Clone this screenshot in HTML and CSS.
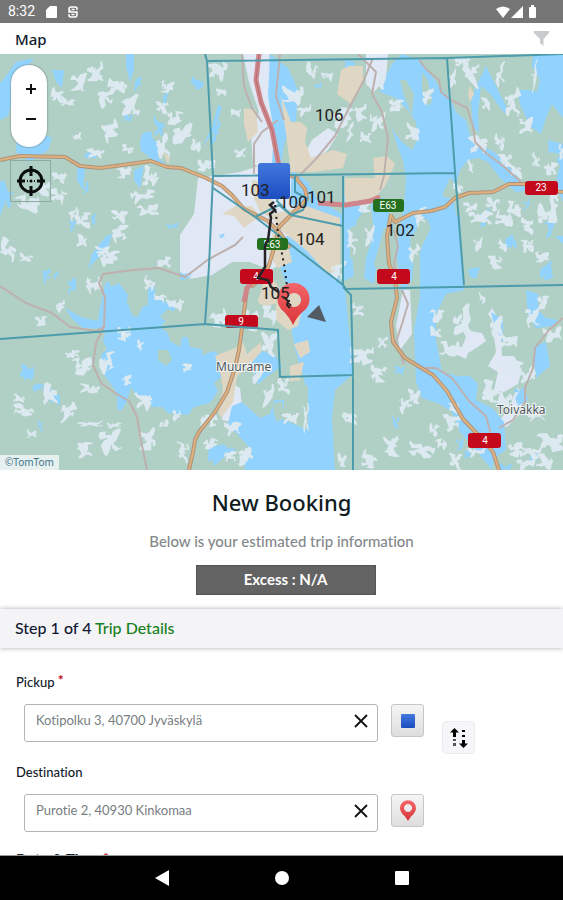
FILE: index.html
```html
<!DOCTYPE html>
<html lang="en">
<head>
<meta charset="utf-8">
<meta name="viewport" content="width=device-width, initial-scale=1">
<title>New Booking</title>
<link rel="stylesheet" href="styles.css">
</head>
<body>
<div class="status">
  <span class="clock">8:32</span>
  <svg width="11" height="12" viewBox="0 0 11 12"><path fill="#fff" d="M4 0h6q1 0 1 1v10q0 1-1 1H1q-1 0-1-1V4z"/></svg>
  <svg width="10" height="12" viewBox="0 0 10 12"><path fill="none" stroke="#fff" stroke-width="1.500" d="M9 4V2.500Q9 1 7 1H3Q1 1 1 3t2 3h4q2 0 2 2.500T7 11H3Q1 11 1 9.500V8M1 3v3h8v3M3.500 3.500h3M3.500 8.500h3"/></svg>
  <svg class="status-right" width="43" height="14" viewBox="0 0 43 14"><path fill="#fff" d="M0 4Q7-1 14 4L7 13zM27 1v12H15zM33 3q0-1 1-1h1V0h3v2h1q1 0 1 1v9q0 1-1 1h-5q-1 0-1-1z"/></svg>
</div>
<header class="topbar">
  <h1>Map</h1>
  <button class="filter" type="button" aria-label="Filter"><svg width="15" height="15" viewBox="0 0 15 15"><path fill="#c9cbcd" d="M0 0h15v2L9.500 8v7L6 12V8L0 2z"/></svg></button>
</header>
<section class="map" aria-label="Map">
<svg class="canvas" viewBox="0 54 563 416">
  <defs>
    <linearGradient id="blue" x1="0" y1="0" x2="0" y2="1"><stop offset="0" stop-color="#4278dd"/><stop offset="1" stop-color="#1c4dc0"/></linearGradient>
    <linearGradient id="red" x1="0" y1="0" x2="0" y2="1"><stop offset="0" stop-color="#f4666a"/><stop offset="1" stop-color="#d93538"/></linearGradient>
  </defs>
  <rect y="54" width="563" height="416" fill="#b0d0c5"/>
  <g fill="#dfe8f4">
    <path d="M180 235L194 214 198 178 214 176 240 172 262 165 275 172 300 180 300 240 285 262 270 270 250 262 232 262 212 275 190 279 180 272z"/>
    <path d="M243 54h26l4 40 6 60-8 18-18-8-2-30 8-22-10-30zM366 54l22 0-2 24-12 14-8-8zM312 140l16-12 10 6-10 16-18 14-8-6zM403 290l7 0 2 44-12 16-4-24zM446 350l6-5 10 2 4-10-6-12 6-6 4 12 12 2 4 8-8 6-10 6-2 6zM488 366l8-14-4-32-4-6 4-6 8 14 2 34 12 0 8 14-4 14-14 8-10-2 4-18zM495 425l14-16 8-22 10 12-6 14-14 14zM226 380l14 8 2 18-10 16-10-2z"/>
  </g>
  <g fill="#91d3fe">
    <path d="M392 64L402 54 420 60 432 76 440 88 450 98 456 112 466 120 470 135 482 146 494 152 508 165 520 180 530 190 516 192 500 178 488 162 478 158 468 160 460 170 456 184 450 178 442 196 454 200 460 240 460 284 440 288 422 280 434 240 428 220 418 216 416 236 412 280 402 292 396 250 404 206 406 180 403 160 398 148 391 126 394 132 402 142 412 150 417 140 416 122 408 110 396 98 380 92 384 80z"/>
    <path d="M533 54H563V118L552 104 546 118 541 134 530 126 520 104 518 90 530 90 537 92 540 80 532 66zM486 66l8 16 13 26-2 6-15-20-9-8-3 28 1 20-6-8-2-26 7-17zM345 60l10 2-2 12-8-4zM548 140l15 4v12l-10-4-4 6zM556 160l7-8v50l-6-12z"/>
    <path d="M344 196l14-6 10 8-4 12-8 12 4 16-8 16 2 22-12 6zM370 198l14 0 6 12-4 22-8 22-4 30-10-6 2-20 8-26zM420 250l14-28 14-8 12 2 4 74-18 4-10 20 0 26 6 32 16 4 12 0 8 8-2 16 16 8 12 14 2 28-12 8-2 12-16-20-16-18-8-20-12-8-18-6-6-16-2-52 6-34z"/>
    <path d="M270 54l18 14 10 22-2 30-12 24-4 28-8-10 2-30-6-36zM292 170l16 12 10 18 24 14 2 14-18-4-22-8-14-14zM286 236l24 4 20 24 15 24 3 32 3 26 2 28-18 16-3 28 3 54H244l4-26-20-22 4-18 10-4 18 16 10-4 4-14 14 0 8 12 12 3 0-18-6-26-6-18-4-20 0-20-5-26-7-20z"/>
    <path d="M105 284l4-3 2 6 8-4 9 12-2 10 4 10 8 2 4-10 6-2 0-16 6-6 2 18 6-4 4 6 10 0-2 8-6-2-8 8 6 4-6 6 8 6 2 8 10 6 2-10 6 0 2 10 12 2 0 6 12-4 10 8-2 10 4 4-12 10 4 8-8 12-16 4-6 8-20-2-6-6-10 0-8-10-8-2-5-8-4 14-6 10-4-2 0-16-14-20-2-18 6-6-4-8 2-8-8-10zM65 308l16 9 24 6 2 6-24-1-10-8z"/>
    <path d="M0 84l16-22 18-4-8 10 4 10-14 8-8 30-8 4zM18 118l20 14 14 6-4 12-18 12-14-10zM143 133l8-2 2 8 7 6-2 12 8 8-8 0-11-10-6-4-1-10zM194 80l10 2-2 6-6 2zM218 105l4 2-8 24-12 16 10-20zM126 54l8 0 0 16-4 12-4-16zM52 70l12 0-2 18-6-6zM106 236l6-2-4 14-16 16-4 6 4-16zM84 154l16-4-4 8-10 0zM77 168l8 0-2 22-6-10zM134 170l10-4-4 22-6-8zM4 180l4 12-4 14-4 10v-34zM22 372l10-4 2 8-10 4zM42 384l8 4 10 10-8 0-8-4zM110 290l18 14 6 16-8 4-12-12zM240 356l14-6 20 4 8 12-14 10-10 8-6-16zM210 448l14-4 4 10-14 12z"/>
    <path d="M491 312l12 8 0 22-8-14zM526 290l12 4 0 16 8 8 12 2-6 6-16 2-8-12zM534 346l12-4 4 24-14 12-2-18zM516 396l8-10 4 14-10 6zM506 238l8-3-2 12-8 0zM540 270l10-8 2 10-12 6zM555 236l8 0 0 8zM468 269l12-2-4 12-6-2z"/>
  </g>
  <g fill="#dfd7c3">
    <path d="M349 66l14 0 0 18-12 20-14-10 4-24zM244 108l12 2 2 22-10 10-4-18zM281 96l10 26 10 0 6 6-2 14 6 16 22-8 14 4-4 14-30 4-22 0zM222 214l14-8 16 0 8 10-16 12-10-12zM252 180l18 4 4 36-14-8-6-14zM306 206l34 12 0 52-12 4-22-24-30-24-4-12zM345 178l30 0-2-20 14-2 8 8-10 22-12 14-28 4zM274 228l14 16 4 18-14 6-10-14zM246 276l20-4 14 16 4 14-20 4-18-10zM215 356l20-8 8-6 4 12 14-12 0 10-14 16-10 8-4 26-12 16-4-8 6-20-2-14zM294 344l14-4 2 12-10 6zM290 366l14-4-4 18-10 4zM470 86l4 8-4 8-2-8zM162 150l8 8-2 6zM276 292l22-8 4 26-4 16-10 4-12-10z"/>
  </g>
  <g fill="#b0d0c5">
    <path d="M356 94l20-2 14 8 14 14 6 18-12-8-12-4-6-8-16-8zM400 80l6 0 8 14-2 22-8-20zM422 72l6 8 4 22-4 4-6-14zM488 92l12 16 14 16 20 18 10 26-14 8-16-16-20-12-12-16zM540 156l12-4 8 14-8 28-10 0zM350 228l12-6 0 22-12 16zM384 228l10 0-4 34-12 12-4-10zM410 238l8-10 4 20-10 16zM158 350l10 0 4 10-6 6-8-6zM284 384l12-4 12 6 0 44-24-10zM272 404l10-3 4 18-10 2zM244 276l22-2-18 60-14-6z"/>
  </g>
  <g id="patches"></g>
  <g fill="none" stroke="#beb0ae" stroke-width="2" stroke-linejoin="round">
    <path d="M0 286l26 17 26 10 18 14 26 4 8-4 1-30-6-14 4-9 30-4 26-2 26 9 24-18 26-14 8-8"/>
    <path d="M104 327l-8 16-3 22 8 18 14 10 14 8 8 16 4 24 6 29"/>
    <path d="M242 54l2 32 8 22 10 14M278 120l-16 12-8 12 0 30M280 54l-4 42 8 24M373 58l-10 24-14 26-14 28-20 24-18 18M358 54l18 18-4 22 10 18 6 26-4 38-4 14M419 60l8 10 12 10 2 12 10 8 16 8 6 18 2 16 12 12 14 10 20 18 14 12M563 318l-14 12-14 18-2 20-8 20 0 14-12 18-14 8M402 290l6 14-6 20-6 18 8 22M420 368l16 0 16 10 18 24 16 14 6 22"/>
    <path d="M394 230l4 16-4 18 4 16"/>
  </g>
  <g fill="none" stroke-linejoin="round">
    <g id="roads">
      <path d="M0 160l20-4 45 1 15 9 20 2 30-4 21-3 16 6 14 1 25 10 16 8 10 9 12 14 24 12 13 13 9 14"/>
      <path d="M247 288l-4 32-4 30-4 18-8 24-12 20-16 20-4 8-2 12-4 18"/>
      <path d="M563 192l-22-3-14-5-18 0-16 8-24 1-14 5-10 9-14 4-18 2-18 9-4-6M391 214l-4 22 2 28 6 14 2 20-6 24 2 20 12 16 28 17 14 16 16 28 18 19 12 14 8 24"/>
      <path d="M281 173l14 4 10 12 2 10-10 10-18 18-4 18-6 20-6 12-12 10"/>
    </g>
    <g stroke="#cf868a" stroke-width="5"><path d="M259 54l-3 26 5 22 11 28 7 36 0 10M318 203l28 2 24-4 10-4M256 278l-9 10-3 14"/></g>
    <path stroke="#b46e75" d="M259 54l-3 26 5 22 11 28 7 36"/>
  </g>
  <g fill="none" stroke="#4d9cac" stroke-width="2">
    <path d="M205 54l2 7 6 115-4 90-4 58 73 6 2 47 73-2-2-80-8-8M207 61l240-3 116-4M447 58l8 114 9 113M213 176l242-3M0 339l205-15M213 188l42 29 88 68 3 4 217-4M343 176v110M255 217l24-12 12 10 52 11M295 176v16l12 6-4 12-12 5-14-14 4-20M353 375v95"/>
  </g>
  <path fill="none" stroke="#1d1d1d" stroke-width="2" stroke-dasharray="2 4" d="M275 205l3 28 6 31 6 44"/>
  <g class="places"><text x="216" y="371">Muurame</text><text x="497" y="414">Toivakka</text></g>
  <g class="roads">
    <rect class="sign" x="240" y="269" width="33" height="15" rx="3"/><rect class="sign" x="225" y="315" width="33" height="13" rx="3"/><rect class="sign" x="377" y="269" width="33" height="15" rx="3"/><rect class="sign" x="468" y="433" width="33" height="15" rx="3"/><rect class="sign" x="525" y="181" width="33" height="14" rx="3"/>
    <rect class="sign green" x="373" y="199" width="31" height="13" rx="3"/><rect class="sign green" x="257" y="238" width="31" height="12" rx="3"/>
    <text x="256" y="280">4</text><text x="241" y="325">9</text><text x="394" y="280">4</text><text x="485" y="444">4</text><text x="541" y="191">23</text><text x="388" y="209">E63</text><text x="272" y="248">E63</text>
    <path stroke="#4d9cac" stroke-width="2" d="M225 326l33 2"/>
  </g>
  <path fill="none" stroke="#252326" stroke-width="2.500" d="M274 202l-4 3 5 5-5 4 1 4-3 22-3 5 0 22-7 11 10 2 3 7 9 6 3 6 8 7"/>
  <rect x="258" y="163" width="32" height="36" rx="3" fill="url(#blue)"/>
  <path fill="url(#red)" fill-rule="evenodd" d="M293 325Q289 316 281 309A16 16 0 1 1 306 309Q297 316 293 325zM294 293a7 7 0 1 0 .1 0z"/>
  <path fill="none" stroke="#222" stroke-width="2" d="M284 297l4 4-1 4 3 3"/>
  <path fill="#535b62" d="M319 305l7 17-19-5z"/>
  <g class="zones"><text x="315" y="121">106</text><text x="241" y="196">103</text><text x="279" y="208">100</text><text x="307" y="203">101</text><text x="296" y="245">104</text><text x="386" y="236">102</text><text x="261" y="299">105</text></g>
</svg>
<div class="zoom">
  <button type="button" aria-label="Zoom in"><svg width="10" height="10" viewBox="0 0 10 10"><path stroke="#111" stroke-width="2" d="M0 5h10M5 0v10"/></svg></button>
  <button type="button" aria-label="Zoom out"><svg width="10" height="10" viewBox="0 0 10 10"><path stroke="#111" stroke-width="2" d="M0 5h10"/></svg></button>
</div>
<button class="locate" type="button" aria-label="My location"><svg width="30" height="30" viewBox="0 0 30 30"><g fill="none" stroke="#0b0f0f" stroke-width="3"><circle cx="15" cy="15" r="11"/><path d="M15 0v10M15 20v10M1 15h8M21 15h8"/></g><circle cx="15" cy="15" r="1.500"/><path stroke="#0b0f0f" stroke-width="2" d="M11 15h1M18 15h1"/></svg></button>
<span class="credit">©TomTom</span>
</section>
<main class="panel">
  <div class="intro">
    <h2>New Booking</h2>
    <p>Below is your estimated trip information</p>
    <div class="excess">Excess : N/A</div>
  </div>
  <h3 class="step">Step 1 of 4 <span>Trip Details</span></h3>
  <form class="trip">
    <div class="fields">
      <label for="pickup">Pickup <sup>*</sup></label>
      <div class="row">
        <div class="box"><input id="pickup" type="text" value="Kotipolku 3, 40700 Jyväskylä"><button type="reset" aria-label="Clear pickup"><svg width="14" height="14" viewBox="0 0 14 14"><path stroke="#111" stroke-width="1.800" d="M1 1l12 12M13 1L1 13"/></svg></button></div>
        <button class="pick" type="button" aria-label="Choose pickup on map"><svg width="14" height="14" viewBox="0 0 14 14"><rect width="14" height="14" rx="1" fill="url(#blue)"/></svg></button>
      </div>
      <label for="destination">Destination</label>
      <div class="row">
        <div class="box"><input id="destination" type="text" value="Purotie 2, 40930 Kinkomaa"><button type="reset" aria-label="Clear destination"><svg width="14" height="14" viewBox="0 0 14 14"><path stroke="#111" stroke-width="1.800" d="M1 1l12 12M13 1L1 13"/></svg></button></div>
        <button class="pick" type="button" aria-label="Choose destination on map"><svg width="18" height="21" viewBox="-1 -1 18 21"><path fill="url(#red)" fill-rule="evenodd" d="M8 20Q6 16 2.500 13A8 8 0 1 1 13.500 13Q10 16 8 20zM8 3a4 4 0 1 0 .1 0z"/></svg></button>
      </div>
      <div class="date">Date &amp; Time <sup>*</sup></div>
    </div>
    <button class="swap" type="button" aria-label="Swap pickup and destination"><svg width="18" height="20" viewBox="0 0 18 20"><path d="M4.500 0L9 4.500H6V9H3V4.500H0zM13.500 20L9 15.500h3V12h3v3.500h3z"/><path fill="#555" d="M3 11h3v2H3zM3 15h3v3H3z"/><path d="M12 2h3v2h-3zM12 7h3v2h-3z"/></svg></button>
  </form>
</main>
<nav class="nav">
  <button type="button" aria-label="Back"><svg width="14" height="16" viewBox="0 0 14 16"><path fill="#fff" d="M14 0v16L0 8z"/></svg></button>
  <button type="button" aria-label="Home"><svg width="14" height="14" viewBox="0 0 14 14"><circle cx="7" cy="7" r="7" fill="#fff"/></svg></button>
  <button type="button" aria-label="Overview"><svg width="14" height="14" viewBox="0 0 14 14"><rect width="14" height="14" rx="1" fill="#fff"/></svg></button>
</nav>
<script src="map.js"></script>
</body>
</html>
```
FILE: styles.css
```css
* { box-sizing: border-box; }
body {
  margin: 0;
  height: 100vh;
  display: flex;
  flex-direction: column;
  overflow: hidden;
  background: #fff;
  color: #12202a;
  font-family: Lato, "Liberation Sans", sans-serif;
  font-variant-ligatures: none;
}
h1, h2, h3, p { margin: 0; font-weight: 500; }
button { padding: 0; border: 0; background: none; display: flex; align-items: center; justify-content: center; }
svg { display: block; }
.status {
  flex: none;
  height: 23px;
  display: flex;
  align-items: center;
  gap: 11px;
  padding: 0 24px 0 8px;
  background: #757575;
  color: #fff;
  font: 14px/23px Roboto, sans-serif;
}
.status-right { margin-left: auto; }
.topbar {
  flex: none;
  height: 31px;
  display: flex;
  align-items: center;
  justify-content: space-between;
  padding: 0 14px 0 15px;
}
.topbar h1 { font: 500 15px/20px "Noto Sans", sans-serif; }
.map { position: relative; flex: none; }
.canvas { width: 100%; height: auto; }
.zones { font: 17px Roboto, sans-serif; fill: #222; }
.places { font: 12px "Noto Sans", sans-serif; fill: #4e5860; stroke: #f2f5f5; stroke-width: 2px; paint-order: stroke; }
.roads { font: 10px Roboto, sans-serif; fill: #fff; text-anchor: middle; }
#roads { stroke: #ad927b; stroke-width: 4px; }
#roads-top { stroke: #dfb07d; stroke-width: 2px; }
.sign { fill: #c3091b; }
.green { fill: #24701f; }
.zoom {
  position: absolute;
  left: 11px;
  top: 11px;
  width: 36px;
  height: 82px;
  padding: 9px 0 13px 4px;
  display: grid;
  border-radius: 18px;
  background: #fff;
  box-shadow: 0 0 2px #566;
}
.locate {
  position: absolute;
  left: 10px;
  top: 106px;
  width: 41px;
  height: 42px;
  border: 1px solid #8fa9a3;
}
.credit {
  position: absolute;
  left: 0;
  bottom: 0;
  padding: 0 5px;
  background: #e6f0ef;
  color: #42738e;
  font: 10px/15px "Noto Sans", sans-serif;
}
.panel { flex: 1; min-height: 0; overflow: hidden; background: #fff; }
.intro {
  display: flex;
  flex-direction: column;
  align-items: center;
  padding: 17px 16px 14px;
  text-align: center;
}
.intro h2 { font: 500 22px/30px "Noto Sans", sans-serif; color: #101c22; }
.intro p { margin-top: 14px; font-size: 15px; line-height: 20px; color: #83888b; }
.excess {
  width: 180px;
  margin: 14px 0 0 8px;
  padding-bottom: 2px;
  border: 1px solid #555;
  background: #636363;
  color: #fff;
  font-size: 15px;
  font-weight: 700;
  line-height: 26px;
}
.step {
  padding: 0 15px 2px;
  background: #f4f4f7;
  box-shadow: 0 0 5px #aaa;
  font-size: 16px;
  line-height: 37px;
  color: #101830;
}
.step span { color: #17801b; }
.trip {
  display: grid;
  grid-template-columns: minmax(0, 1fr) 33px;
  gap: 18px;
  padding: 24px 88px 0 16px;
}
.fields label { display: block; font-size: 13px; font-weight: 500; line-height: 20px; }
.date { font-size: 15px; font-weight: 700; line-height: 14px; }
sup { color: #c00d18; font-size: 14px; font-weight: 700; line-height: 0; vertical-align: 2px; }
.row { display: flex; align-items: flex-start; gap: 13px; margin: 12px 0 20px 8px; }
.box {
  flex: 1;
  min-width: 0;
  height: 38px;
  display: flex;
  border: 1px solid #b5b5b5;
  border-radius: 3px;
}
.box input {
  flex: 1;
  min-width: 0;
  padding: 0 0 6px 11px;
  border: 0;
  outline: 0;
  background: none;
  color: #777d81;
  font: 13px Lato, sans-serif;
  font-variant-ligatures: none;
}
.box button { width: 32px; padding-bottom: 4px; }
.pick { flex: none; width: 33px; height: 33px; border: 1px solid #c6c6c6; border-radius: 3px; background: linear-gradient(#f5f5f5, #dedede); }
.swap { width: 33px; height: 33px; margin-top: 49px; border: 1px solid #ececef; border-radius: 4px; background: #f6f6f8; }
.nav {
  flex: none;
  height: 45px;
  display: flex;
  align-items: center;
  justify-content: center;
  border-top: 1px solid #999;
  background: #000;
}
.nav button { width: 120px; height: 44px; }
```
FILE: map.js
```js
// Clearings and ponds: centre x, centre y, width, height.
const clearings = [
  [95,72,14,20],[78,82,12,20],[118,86,18,14],[57,96,10,16],[68,102,14,8],[105,98,14,18],[131,106,16,22],[167,87,12,12],[110,131,16,20],[182,134,18,22],
  [174,118,14,14],[162,108,10,14],[196,146,10,12],[77,136,9,6],[163,146,12,24],[96,153,16,10],[128,149,12,8],[142,196,24,12],[150,176,14,18],[124,172,12,14],
  [60,177,14,10],[28,205,22,18],[58,196,16,12],[44,188,12,16],[83,220,14,18],[73,214,8,14],[120,216,16,12],[148,211,22,10],[119,233,14,18],[102,250,14,8],
  [8,250,14,24],[26,258,14,7],[82,241,10,12],[108,257,18,16],[164,263,14,10],[93,285,14,14],[150,283,10,14],[60,306,8,12],[41,321,10,10],[72,354,14,8],
  [82,366,18,16],[106,362,14,22],[90,389,20,9],[50,394,14,20],[24,410,20,12],[19,399,12,8],[68,413,12,22],[90,424,26,6],[32,434,10,8],[111,442,18,26],
  [148,440,16,22],[84,450,14,16],[114,426,14,6],[164,424,8,8],[176,416,8,10],[208,420,14,14],[210,444,14,10],[232,428,16,12],[230,456,12,10],[246,458,14,18],
  [184,452,10,22],[218,318,16,16],[250,321,18,20],[270,315,14,18],[270,344,16,24],[256,372,14,20],[176,304,16,12],[160,298,12,8],[124,334,14,12],[140,345,6,10],
  [187,368,9,8],[145,400,14,18],[127,380,8,10],[218,71,18,16],[236,113,10,8],[240,153,12,8],[222,92,10,8],[206,166,18,12],
  [312,70,12,14],[294,94,20,18],[328,76,12,8],[342,118,18,20],[376,121,14,20],[396,106,14,12],[381,78,10,22],[413,132,12,18],[427,96,10,16],[360,112,12,16],
  [350,132,6,20],[304,110,14,10],[366,138,12,10],[463,62,14,10],[452,78,8,18],[471,76,12,28],[500,74,8,26],[512,102,14,28],[526,126,12,18],[534,76,5,34],
  [486,104,8,14],[500,142,10,16],[479,144,18,16],[506,160,12,14],[516,172,10,16],[471,166,5,14],[458,188,10,8],[550,168,12,12],[536,160,8,14],[548,214,18,20],
  [514,210,14,16],[480,218,24,12],[504,220,16,16],[493,204,14,10],[528,226,10,18],[470,207,14,8],[553,196,10,16],[352,242,10,24],[370,236,8,22],[414,253,9,18],
  [364,206,12,14],[338,270,12,20],[358,310,10,14],[362,356,24,16],[378,374,14,18],[382,342,8,12],[436,332,10,12],[436,315,12,12],[462,320,18,30],[450,349,20,12],
  [496,326,12,20],[508,342,18,12],[510,368,24,14],[528,376,14,16],[482,298,6,12],[552,334,20,12],[542,302,10,14],[532,318,12,18],[492,392,16,24],[506,402,14,18],
  [406,404,12,20],[415,396,10,16],[454,408,10,10],[452,422,14,18],[434,430,9,12],[422,450,26,14],[392,447,12,22],[370,459,14,16],[456,462,12,18],[442,444,10,10],
  [552,442,24,20],[532,452,20,10],[516,450,14,12],[545,462,16,14],[526,464,18,10],[536,416,18,8],[476,452,18,8],[350,419,12,14],[342,460,8,14],[291,418,16,10],
  [268,396,10,24],[306,418,5,30],[284,386,10,18],[542,258,14,10],[528,246,10,14],[496,262,12,14],[503,246,8,12],[478,244,8,14],[420,216,10,20],[562,152,6,16]
];
const ponds = [
  [138,84,7,14],[128,118,10,6],[160,126,10,20],[165,97,5,16],[86,188,6,12],[8,196,8,24],[72,226,6,12],[93,219,5,12],[72,286,8,16],[46,276,8,14],
  [27,373,14,14],[37,388,8,8],[55,398,10,14],[40,426,4,14],[56,275,5,8],[185,276,12,8],[172,226,12,6],[211,452,8,18],[230,450,12,8],[222,236,5,4],
  [216,132,7,24],[196,83,8,12],[396,422,6,14],[362,358,8,8],[318,86,8,5],[527,205,6,12],[468,453,6,12],[534,458,8,12],[506,468,14,8],[460,444,7,12],
  [484,218,8,18],[550,228,8,20],[520,395,8,16],[548,271,10,18],[514,242,6,14],[400,370,10,8]
];
let seed = 41;
const rand = () => (seed = (seed * 16807) % 2147483647) / 2147483647;
// A crooked ribbon between two points, with an uneven width.
const ribbon = (x1, y1, x2, y2, width) => {
  const length = Math.hypot(x2 - x1, y2 - y1) || 1;
  const nx = (y1 - y2) / length;
  const ny = (x2 - x1) / length;
  const near = [];
  const far = [];
  for (let i = 0; i <= 5; i++) {
    const t = i / 5;
    const bend = (rand() - 0.5) * width * 0.9;
    const half = width * (i % 5 ? 0.2 + rand() * 0.4 : 0.15);
    const x = x1 + (x2 - x1) * t + nx * bend;
    const y = y1 + (y2 - y1) * t + ny * bend;
    near.push(`${(x + nx * half).toFixed(1)} ${(y + ny * half).toFixed(1)}`);
    far.unshift(`${(x - nx * half).toFixed(1)} ${(y - ny * half).toFixed(1)}`);
  }
  return `M${near.concat(far).join('L')}z`;
};
const outline = ([x, y, w, h]) => {
  const lean = rand() < 0.5 ? -1 : 1;
  const dx = w / 2 * lean;
  const dy = h / 2;
  const width = Math.min(w, h) * 0.55;
  return ribbon(x - dx, y - dy, x + dx * 0.7, y + dy, width)
    + ribbon(x, y, x + dx, y - dy * rand(), width * 0.8)
    + ribbon(x, y, x - dx, y + dy * rand(), width * 0.6);
};
const layer = document.getElementById('patches');
for (const [shapes, fill] of [[ponds, '#91d3fe'], [clearings, '#dce9f0']]) {
  for (const shape of shapes) {
    const path = document.createElementNS('http://www.w3.org/2000/svg', 'path');
    path.setAttribute('d', outline(shape));
    path.setAttribute('fill', fill);
    layer.append(path);
  }
}
// Main roads are drawn twice: a dark casing with a lighter line on top.
const casing = document.getElementById('roads');
const surface = casing.cloneNode(true);
surface.id = 'roads-top';
casing.after(surface);
```
